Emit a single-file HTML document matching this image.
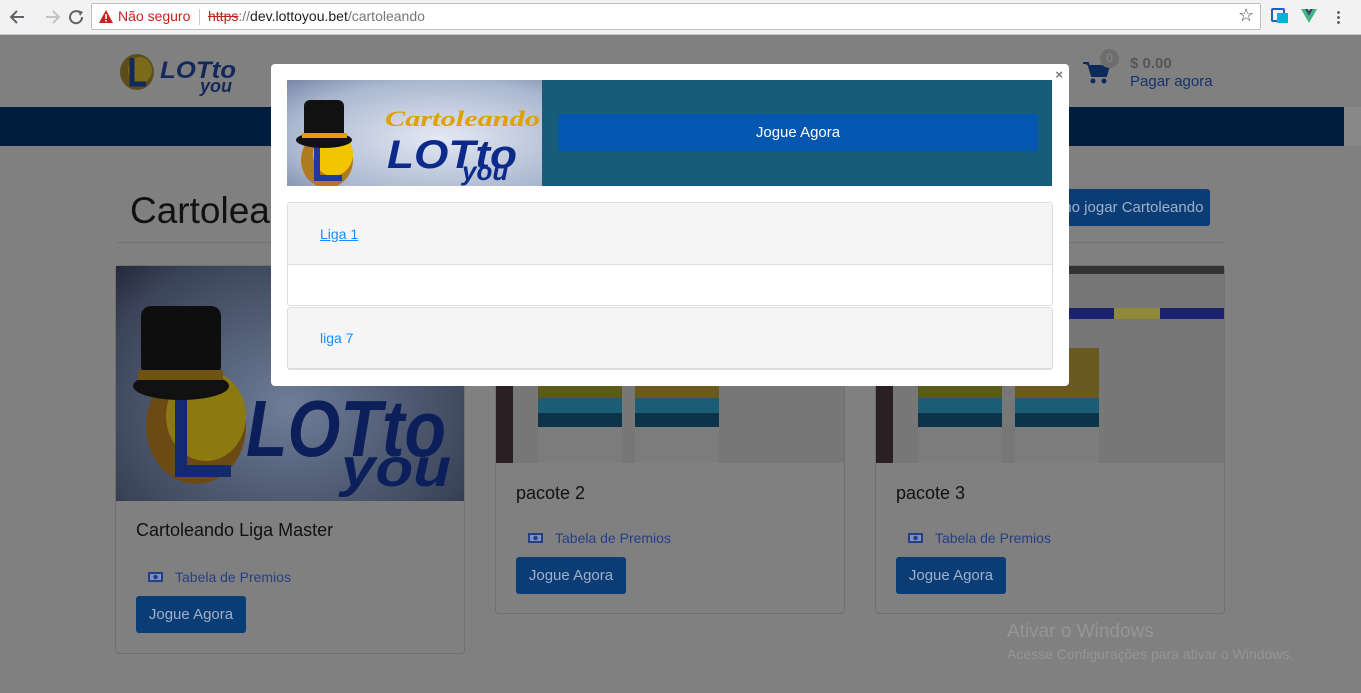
<!DOCTYPE html>
<html><head><meta charset="utf-8"><style>
*{box-sizing:border-box;margin:0;padding:0}
body{width:1361px;height:693px;overflow:hidden;background:#808080;font-family:"Liberation Sans",sans-serif;position:relative}
.a{position:absolute}
.chrome{left:0;top:0;width:1361px;height:35px;background:#f2f2f2;border-bottom:1px solid #c8c8c8}
.url{left:91px;top:3px;width:1170px;height:27px;background:#fff;border:1px solid #c0c0c0;border-radius:2px;font-size:14px;line-height:25px}
.btn{background:#0a3c76;color:#9fb1c6;border-radius:3px;font-size:15px;text-align:center;white-space:nowrap}
.card{border:1px solid #707070;border-radius:4px;background:#808080}
.lnk{color:#243f86;font-size:14px}
.ic{display:inline-block;width:15px;height:10px;border:2px solid #243f86;margin-right:12px;background:radial-gradient(circle,#243f86 2px,#8090c0 2.5px)}
</style></head><body>
<div class="a chrome">
<svg class="a" style="left:8px;top:8px" width="80" height="18"><path d="M16 9H4M9 3L3 9l6 6" stroke="#5f6368" stroke-width="2" fill="none"/><path d="M38 9h12M45 3l6 6-6 6" stroke="#c4c4c4" stroke-width="2" fill="none"/><path d="M71 4a6 6 0 1 0 3 5" stroke="#5f6368" stroke-width="2" fill="none"/><path d="M70 2l5 2-3 4z" fill="#5f6368"/></svg>
<div class="a url"><svg class="a" style="left:6px;top:5px" width="16" height="15"><path d="M8 1L15 14H1z" fill="#c5221f"/><rect x="7.2" y="5" width="1.6" height="5" fill="#fff"/><rect x="7.2" y="11" width="1.6" height="1.6" fill="#fff"/></svg>
<span class="a" style="left:26px;color:#c5221f">Não seguro</span><span class="a" style="left:107px;top:5px;width:1px;height:16px;background:#ccc"></span>
<span class="a" style="left:116px"><span style="color:#c5221f;text-decoration:line-through">https</span><span style="color:#777">://</span><span style="color:#222">dev.lottoyou.bet</span><span style="color:#777">/cartoleando</span></span>
<span class="a" style="left:1146px;top:-1px;font-size:18px;color:#444">☆</span></div>
<div class="a" style="left:1271px;top:8px;width:14px;height:14px;border:2px solid #1565c0;border-radius:2px"></div><div class="a" style="left:1277px;top:13px;width:11px;height:10px;background:#00b4d8"></div>
<svg class="a" style="left:1301px;top:9px" width="16" height="14"><path d="M0 0h4l4 7 4-7h4L8 14z" fill="#41b883"/><path d="M4 0h3l1 2 1-2h3L8 7z" fill="#35495e"/></svg>
<div class="a" style="left:1337px;top:10px;width:3px;height:15px;background:radial-gradient(circle,#555 1.2px,transparent 1.6px) 0 0/3px 5px"></div>
</div>
<svg class="a" style="left:118px;top:50px" width="124" height="46"><ellipse cx="19" cy="22" rx="17" ry="18" fill="#5c4d1d"/><ellipse cx="22" cy="20" rx="12" ry="13" fill="#7a6a1a"/><path d="M14 8v26h14" stroke="#13285a" stroke-width="5" fill="none"/><text x="42" y="28" font-family="Liberation Sans" font-weight="bold" font-style="italic" font-size="24" fill="#13285a" textLength="76" lengthAdjust="spacingAndGlyphs">LOTto</text><text x="82" y="42" font-family="Liberation Sans" font-weight="bold" font-style="italic" font-size="18" fill="#13285a">you</text></svg>
<svg class="a" style="left:1083px;top:60px" width="30" height="25"><path d="M0 3h5l4 13h14l3-10H7" fill="#0c2a5a" stroke="#0c2a5a" stroke-width="2"/><circle cx="10" cy="21" r="2.5" fill="#0c2a5a"/><circle cx="21" cy="21" r="2.5" fill="#0c2a5a"/></svg>
<div class="a" style="left:1100px;top:49px;width:19px;height:19px;border-radius:50%;background:#6e6e6e;color:#888;font-size:12px;text-align:center;line-height:19px">0</div>
<div class="a" style="left:1130px;top:55px;font-size:15px;color:#555;font-weight:bold">$ 0.00</div>
<div class="a" style="left:1130px;top:73px;font-size:15px;color:#13336a">Pagar agora</div>
<div class="a" style="left:0;top:107px;width:1344px;height:39px;background:#001d3e"></div>
<div class="a" style="left:1344px;top:107px;width:17px;height:39px;background:#888"></div>
<div class="a" style="left:130px;top:190px;font-size:37px;color:#111">Cartoleando</div>
<div class="a btn" style="left:1040px;top:189px;width:170px;height:37px;line-height:37px;text-align:right;padding-right:12px;overflow:hidden">Como jogar Cartoleando</div>
<div class="a" style="left:116px;top:242px;width:1109px;height:1px;background:#747474"></div>
<div class="a card" style="left:115px;top:265px;width:350px;height:389px">
<div class="a" style="left:0;top:0;width:348px;height:235px;background:radial-gradient(ellipse at 50% 60%,#6f7d98,#3a4358 80%,#25293a);overflow:hidden">
<svg width="348" height="235"><ellipse cx="80" cy="160" rx="50" ry="58" fill="#6b4a14"/><ellipse cx="90" cy="150" rx="40" ry="45" fill="#8c7a10"/><path d="M65 130v75h50" stroke="#142a6e" stroke-width="12" fill="none"/><rect x="25" y="40" width="80" height="70" rx="10" fill="#0e0e0e"/><ellipse cx="65" cy="120" rx="48" ry="14" fill="#111"/><rect x="22" y="104" width="85" height="10" fill="#6e5410"/><text x="130" y="190" font-family="Liberation Sans" font-weight="bold" font-style="italic" font-size="80" fill="#0c1f5a" textLength="200" lengthAdjust="spacingAndGlyphs">LOTto</text><text x="225" y="220" font-family="Liberation Sans" font-weight="bold" font-style="italic" font-size="54" fill="#0c1f5a" textLength="110" lengthAdjust="spacingAndGlyphs">you</text></svg></div>
<div class="a" style="left:20px;top:254px;font-size:18px;color:#111">Cartoleando Liga Master</div>
<div class="a lnk" style="left:32px;top:303px"><span class="ic"></span>Tabela de Premios</div>
<div class="a btn" style="left:20px;top:330px;width:110px;height:37px;line-height:37px">Jogue Agora</div>
</div>
<div class="a card" style="left:495px;top:265px;width:350px;height:349px">
<div class="a" style="left:0;top:0;width:348px;height:197px;background:#777;overflow:hidden"><div class="a" style="left:0;top:0;width:17px;height:197px;background:#2a2024"></div><div class="a" style="left:42px;top:100px;width:84px;height:32px;background:#5a5a1a"></div><div class="a" style="left:139px;top:100px;width:84px;height:32px;background:#6a5a20"></div><div class="a" style="left:42px;top:132px;width:84px;height:15px;background:#1b5d74"></div><div class="a" style="left:139px;top:132px;width:84px;height:15px;background:#1b5d74"></div><div class="a" style="left:42px;top:147px;width:84px;height:14px;background:#0c3348"></div><div class="a" style="left:139px;top:147px;width:84px;height:14px;background:#0c3348"></div><div class="a" style="left:42px;top:161px;width:84px;height:36px;background:#7c7c7c"></div><div class="a" style="left:139px;top:161px;width:84px;height:36px;background:#7c7c7c"></div></div>
<div class="a" style="left:20px;top:217px;font-size:18px;color:#111">pacote 2</div>
<div class="a lnk" style="left:32px;top:264px"><span class="ic"></span>Tabela de Premios</div>
<div class="a btn" style="left:20px;top:291px;width:110px;height:37px;line-height:37px">Jogue Agora</div>
</div>
<div class="a card" style="left:875px;top:265px;width:350px;height:349px">
<div class="a" style="left:0;top:0;width:348px;height:197px;background:#777;overflow:hidden"><div class="a" style="left:0;top:0;width:17px;height:197px;background:#2a2024"></div><div class="a" style="left:0;top:0;width:348px;height:8px;background:#333"></div><div class="a" style="left:188px;top:42px;width:160px;height:11px;background:#1d2270"></div><div class="a" style="left:238px;top:42px;width:46px;height:11px;background:#8f8a3a"></div><div class="a" style="left:139px;top:82px;width:84px;height:50px;background:#6a5a20"></div><div class="a" style="left:42px;top:100px;width:84px;height:32px;background:#5a5a1a"></div><div class="a" style="left:42px;top:132px;width:84px;height:15px;background:#1b5d74"></div><div class="a" style="left:139px;top:132px;width:84px;height:15px;background:#1b5d74"></div><div class="a" style="left:42px;top:147px;width:84px;height:14px;background:#0c3348"></div><div class="a" style="left:139px;top:147px;width:84px;height:14px;background:#0c3348"></div><div class="a" style="left:42px;top:161px;width:84px;height:36px;background:#7c7c7c"></div><div class="a" style="left:139px;top:161px;width:84px;height:36px;background:#7c7c7c"></div></div>
<div class="a" style="left:20px;top:217px;font-size:18px;color:#111">pacote 3</div>
<div class="a lnk" style="left:32px;top:264px"><span class="ic"></span>Tabela de Premios</div>
<div class="a btn" style="left:20px;top:291px;width:110px;height:37px;line-height:37px">Jogue Agora</div>
</div>
<div class="a" style="left:1007px;top:621px;font-size:19px;color:#959595">Ativar o Windows</div>
<div class="a" style="left:1007px;top:646px;font-size:14px;color:#959595">Acesse Configurações para ativar o Windows.</div>
<div class="a" style="left:271px;top:64px;width:798px;height:322px;background:#fff;border-radius:4px">
<div class="a" style="right:6px;top:3px;font-size:13px;color:#777;font-weight:bold">×</div>
<div class="a" style="left:16px;top:16px;width:255px;height:106px;background:radial-gradient(ellipse at 60% 55%,#e4e9f3,#aab7cf 70%,#7b86a6);overflow:hidden">
<svg width="255" height="106"><ellipse cx="40" cy="80" rx="26" ry="28" fill="#b07a20"/><ellipse cx="46" cy="74" rx="20" ry="22" fill="#f2c500"/><path d="M30 60v38h25" stroke="#1c3aa0" stroke-width="6" fill="none"/><rect x="17" y="20" width="40" height="40" rx="6" fill="#111"/><ellipse cx="37" cy="60" rx="28" ry="8" fill="#111"/><rect x="15" y="53" width="45" height="5" fill="#e0a000"/><text x="98" y="46" font-family="Liberation Serif" font-weight="bold" font-style="italic" font-size="22" fill="#e0a000" textLength="155" lengthAdjust="spacingAndGlyphs">Cartoleando</text><text x="100" y="88" font-family="Liberation Sans" font-weight="bold" font-style="italic" font-size="40" fill="#0c2a8a" textLength="130" lengthAdjust="spacingAndGlyphs">LOTto</text><text x="175" y="100" font-family="Liberation Sans" font-weight="bold" font-style="italic" font-size="26" fill="#0c2a8a">you</text></svg></div>
<div class="a" style="left:271px;top:16px;width:510px;height:106px;background:#175c78"></div>
<div class="a" style="left:287px;top:50px;width:480px;height:37px;background:#0357b1;border-radius:3px;color:#fff;font-size:15px;text-align:center;line-height:37px">Jogue Agora</div>
<div class="a" style="left:16px;top:138px;width:766px;height:104px;border:1px solid #ddd;border-radius:3px">
<div style="height:62px;background:#f5f5f5;border-bottom:1px solid #ddd;padding:23px 32px;font-size:14px"><span style="color:#1a8cff;text-decoration:underline">Liga 1</span></div></div>
<div class="a" style="left:16px;top:243px;width:766px;height:63px;border:1px solid #ddd;border-bottom:2px solid #ddd;border-radius:3px;background:#f5f5f5;padding:22px 32px;font-size:14px;color:#1a8cff">liga 7</div>
</div>
</body></html>
